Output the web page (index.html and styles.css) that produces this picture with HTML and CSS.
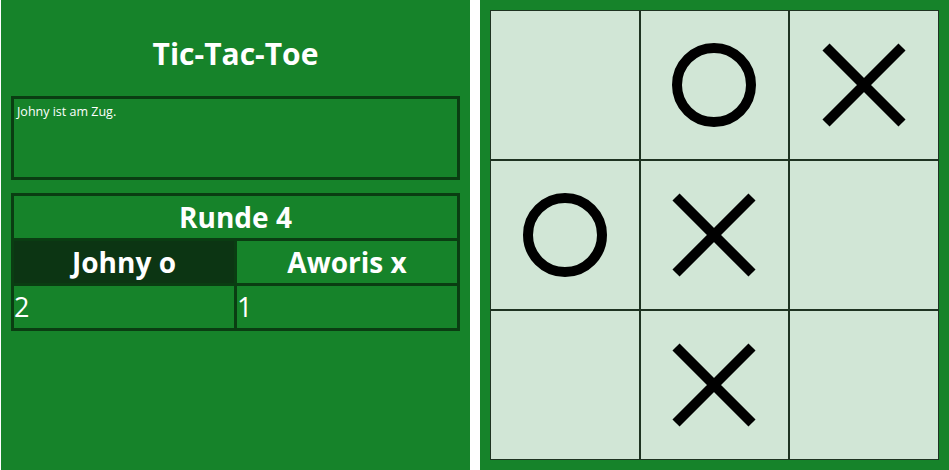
FILE: index.html
```html
<!DOCTYPE html>
<html lang="de">
<head>
<meta charset="utf-8">
<title>Tic-Tac-Toe</title>
<link rel="stylesheet" href="styles.css">
</head>
<body>
<div class="app">
  <section class="panel side">
    <h1 class="title">Tic-Tac-Toe</h1>
    <div class="message">Johny ist am Zug.</div>
    <table class="score">
      <colgroup><col class="col-a"><col class="col-b"></colgroup>
      <tr><th colspan="2" class="round">Runde 4</th></tr>
      <tr><th class="player active">Johny o</th><th class="player sep">Aworis x</th></tr>
      <tr><td class="points">2</td><td class="points sep">1</td></tr>
    </table>
  </section>
  <section class="panel game">
    <div class="board">
      <div class="cell"></div>
      <div class="cell"><svg class="mark" viewBox="0 0 100 100"><circle cx="50" cy="50" r="37"/></svg></div>
      <div class="cell"><svg class="mark" viewBox="0 0 100 100"><path d="M12 12 L88 88 M88 12 L12 88"/></svg></div>
      <div class="cell"><svg class="mark" viewBox="0 0 100 100"><circle cx="50" cy="50" r="37"/></svg></div>
      <div class="cell"><svg class="mark" viewBox="0 0 100 100"><path d="M12 12 L88 88 M88 12 L12 88"/></svg></div>
      <div class="cell"></div>
      <div class="cell"></div>
      <div class="cell"><svg class="mark" viewBox="0 0 100 100"><path d="M12 12 L88 88 M88 12 L12 88"/></svg></div>
      <div class="cell"></div>
    </div>
  </section>
</div>
</body>
</html>
```

FILE: styles.css
```css
* { box-sizing: border-box; }
html, body { margin: 0; padding: 0; background: #ffffff; }
body { font-family: "Open Sans", "Noto Sans", sans-serif; color: #ffffff; }
.app {
  display: grid;
  grid-template-columns: 469px 469px;
  column-gap: 10px;
  padding-left: 1px;
  height: 470px;
}
.panel { background: #16832a; padding: 10px; }
.title {
  margin: 22px 0 20px;
  font-size: 30px;
  line-height: 44px;
  font-weight: 700;
  text-align: center;
}
.message {
  height: 84px;
  border: 3px solid #0a3d12;
  padding: 5px 3px;
  font-size: 12.5px;
  line-height: 16px;
}
.score {
  margin-top: 13px;
  width: 449px;
  table-layout: fixed;
  border-collapse: separate;
  border-spacing: 0;
  border: 3px solid #0a3d12;
}
.col-a { width: 220px; }
.col-b { width: 223px; }
.score th, .score td {
  padding: 0;
  height: 45px;
  line-height: 42px;
}
.score th { font-size: 28px; font-weight: 700; text-align: center; }
.score td { font-size: 27px; font-weight: 400; text-align: left; }
.player, .points { border-top: 3px solid #0a3d12; }
.sep { border-left: 3px solid #0a3d12; }
.round { height: 42px !important; }
.active { background: #0c3513; }
.game { display: flex; }
.board {
  flex: 1;
  display: grid;
  grid-template-columns: repeat(3, 1fr);
  grid-template-rows: repeat(3, 1fr);
  background: #d1e6d6;
}
.cell {
  border: 1px solid #1e3322;
  display: flex;
  align-items: center;
  justify-content: center;
}
.mark { width: 100px; height: 100px; }
.mark circle { fill: none; stroke: #000000; stroke-width: 10; }
.mark path { fill: none; stroke: #000000; stroke-width: 10; stroke-linecap: butt; }
```
